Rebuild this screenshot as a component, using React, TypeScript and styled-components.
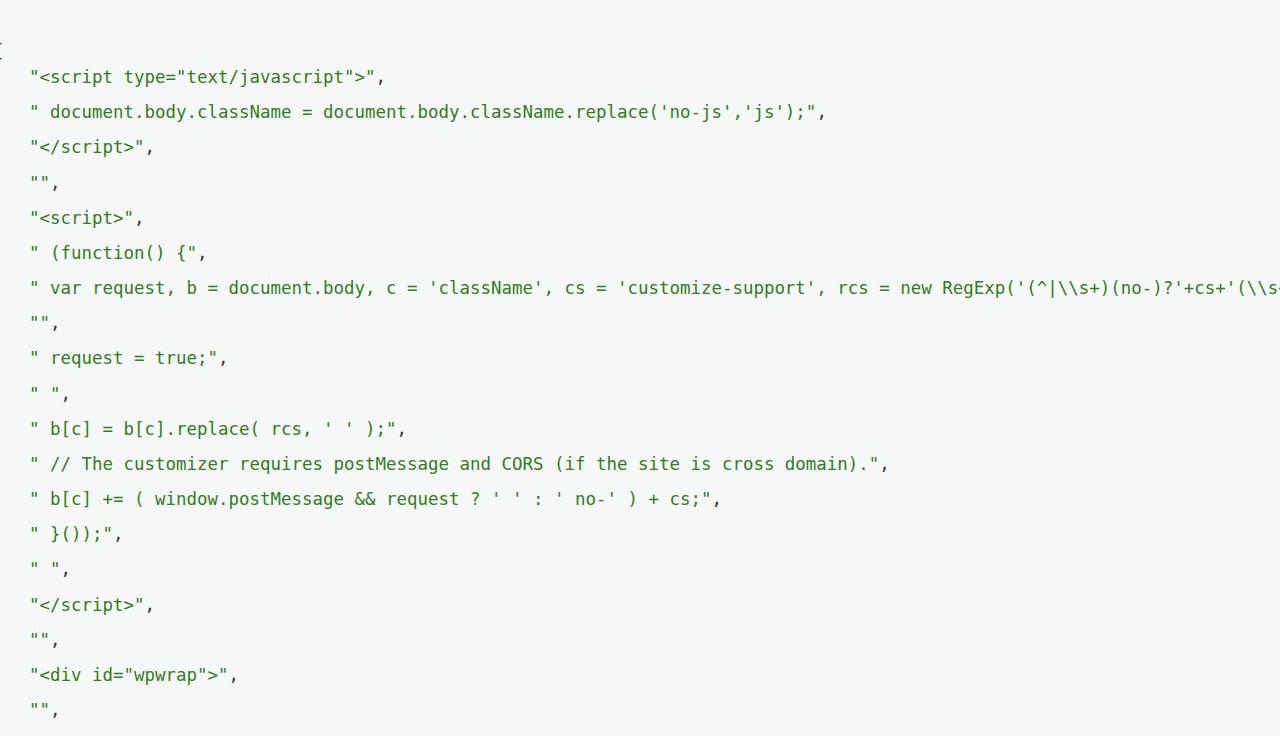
import React from "react";
import styled, { createGlobalStyle } from "styled-components";

const Global = createGlobalStyle`
  html, body {
    margin: 0;
    padding: 0;
    background: #f6f8f7;
    overflow: hidden;
  }
  #root {
    min-height: 100vh;
    background: #f6f8f7;
  }
`;

const Viewer = styled.div`
  width: 1280px;
  height: 736px;
  overflow: hidden;
  box-sizing: border-box;
  padding: 42px 0 0 29px;
  font-family: "DejaVu Sans Mono", "Liberation Mono", monospace;
  font-size: 17.45px;
  color: #333333;
  background: #f6f8f7;
`;

const Bracket = styled.div`
  margin-left: -35px;
  padding-top: 1px;
  line-height: 17px;
  white-space: pre;
`;

const List = styled.div`
  display: flex;
  flex-direction: column;
`;

const Line = styled.div`
  line-height: 35.17px;
  white-space: pre;
`;

const Str = styled.span`
  color: #317c21;
`;

const Punct = styled.span`
  color: #333333;
`;

const lines: string[] = [
  '<script type="text/javascript">',
  " document.body.className = document.body.className.replace('no-js','js');",
  "</script>",
  "",
  "<script>",
  " (function() {",
  " var request, b = document.body, c = 'className', cs = 'customize-support', rcs = new RegExp('(^|\\\\s+)(no-)?'+cs+'(\\\\s+|$)');",
  "",
  " request = true;",
  " ",
  " b[c] = b[c].replace( rcs, ' ' );",
  " // The customizer requires postMessage and CORS (if the site is cross domain).",
  " b[c] += ( window.postMessage && request ? ' ' : ' no-' ) + cs;",
  " }());",
  " ",
  "</script>",
  "",
  '<div id="wpwrap">',
  "",
  '<a class="screen-reader-shortcut" href="#wpbody-content">Skip to main content</a>',
];

export default function App() {
  return (
    <>
      <Global />
      <Viewer>
        <Bracket>[</Bracket>
        <List>
          {lines.map((l, i) => (
            <Line key={i}>
              <Str>{`"${l}"`}</Str>
              <Punct>,</Punct>
            </Line>
          ))}
        </List>
      </Viewer>
    </>
  );
}
